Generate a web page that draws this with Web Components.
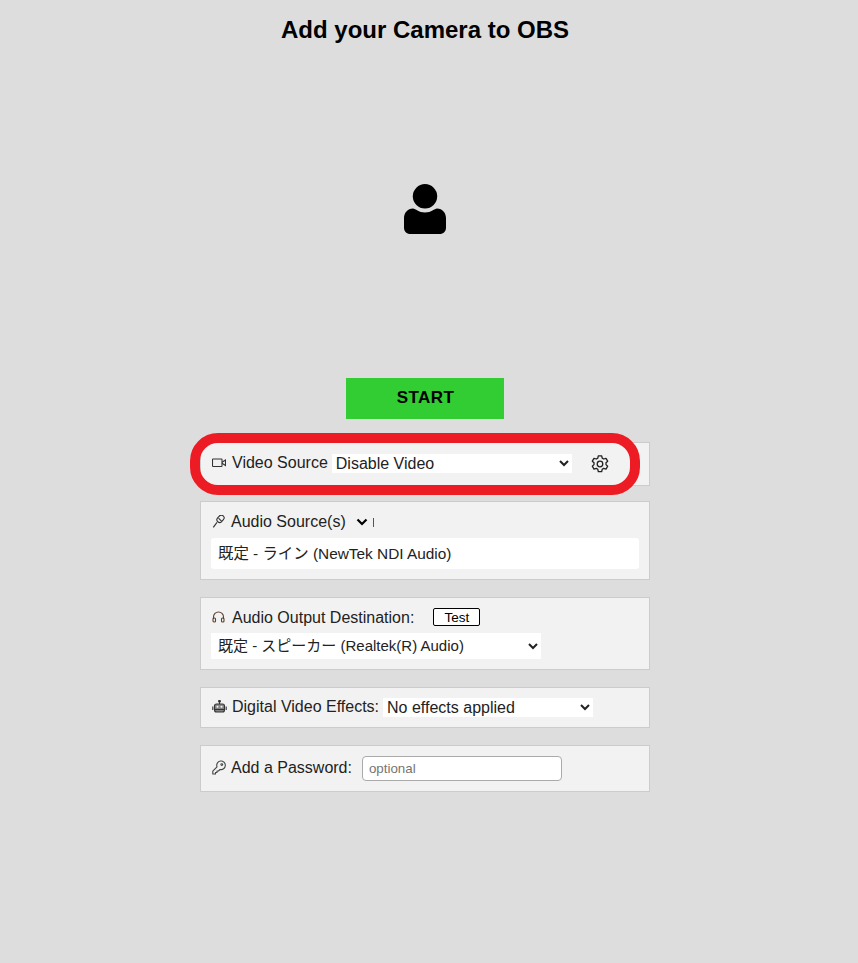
<!DOCTYPE html>
<html lang="en">
<head>
<meta charset="utf-8">
<title>Add your Camera to OBS</title>
<style>
html,body{margin:0;padding:0;background:#ddd;height:100%}
body{font-family:"Liberation Sans",Arial,"Noto Sans CJK JP",sans-serif;color:#000;overflow:hidden}
</style>
</head>
<body>
<setup-page></setup-page>
<template id="tpl-page">
<style>
:host{display:block;width:850px;height:963px;position:relative}
h1{margin:0;padding-top:16px;height:30px;line-height:28px;font-size:24px;font-weight:700;text-align:center}
.preview{display:flex;justify-content:center;height:332px;padding-top:138px;box-sizing:border-box}
.preview svg{display:block;width:42px;height:50px}
.start{display:flex;justify-content:center}
.start button{width:158px;height:41px;border:0;background:#32cd32;color:#000;font:700 17px "Liberation Sans",Arial,sans-serif;letter-spacing:.4px;padding:0 0 1px 1px}
.stack{display:flex;flex-direction:column;align-items:center;margin-top:23px}
.ring{position:absolute;left:190px;top:433px;width:449.500px;height:62px;box-sizing:border-box;border:10px solid #ed1c24;border-radius:28px;pointer-events:none}
select{font:16px "Liberation Sans",Arial,"Noto Sans CJK JP",sans-serif;color:#222;background:#fff;border:0;border-radius:0;outline:0;margin:0;padding:0;height:19px}
.lbl{font-size:16px;line-height:19px;color:#222;white-space:nowrap}
.up{margin-top:-1px;margin-bottom:1px}
.up2{margin-top:-2px;margin-bottom:2px}
.row{display:flex;align-items:center;margin-left:1px}
.ic{display:block;flex:none;fill:none;stroke:#333;stroke-width:1.1}
#video{width:240px;margin-left:4px;margin-bottom:1px}
.gear{margin-left:18.500px;margin-bottom:1px;stroke-width:1.3;stroke:#222}
.chev{display:block;margin-left:10px;fill:none;stroke:#000;stroke-width:2.2}
.meter{width:1px;height:9px;background:#0a8a0a;margin-left:5px;margin-top:1px}
.listing{margin-top:7px;height:31px;line-height:32px;background:#fff;border-radius:3px;padding-left:7px;font-size:15.4px;color:#222;box-sizing:border-box}
.test{margin-left:19px;margin-top:-1px;margin-bottom:1px;width:47px;height:18px;box-sizing:border-box;background:#fff;border:1px solid #000;border-radius:2px;font:13.5px/15px "Liberation Sans",Arial,sans-serif;padding:0;color:#000}
#out{display:block;width:330px;height:26px;margin-top:5px;padding-left:3px;font-size:15px}
#fx{width:210px;margin-left:4px}
input{margin-left:10px;width:200px;height:25px;box-sizing:border-box;border:1px solid #aaa;border-radius:4px;background:#fff;padding:1px 6px;font:13.33px "Liberation Sans",Arial,sans-serif;outline:0}
input::placeholder{color:#757575;opacity:1}
</style>
<h1>Add your Camera to OBS</h1>
<div class="preview">
  <svg viewBox="0 0 42 50"><circle cx="21" cy="12.3" r="12.2" fill="#000"/><path fill="#000" d="M9 24.500C11.500 24.500 14.500 28.500 21 28.500S30.500 24.500 33 24.500C38.500 24.500 42 29 42 34V43.500C42 47.500 39.500 50 35.500 50H6.500C2.500 50 0 47.500 0 43.500V34C0 29 3.500 24.500 9 24.500Z"/></svg>
</div>
<div class="start"><button>START</button></div>
<div class="stack">
  <setup-panel style="height:44px;margin-bottom:15px">
    <div class="row">
      <svg class="ic" style="margin-right:6px;margin-bottom:2px" width="14" height="10" viewBox="0 0 14 10"><rect x=".5" y="1" width="9.500" height="7.500" rx=".6"/><path d="M10 4.200 13.500 2V7.500L10 5.300"/></svg>
      <span class="lbl up2">Video Source</span>
      <select id="video"><option>Disable Video</option></select>
      <svg class="ic gear" width="20" height="20" viewBox="0 0 20 20"><circle cx="10" cy="10" r="2.800"/><path d="M8.300 1.800h3.400l.5 2.300 1.500.9 2.300-.7 1.700 2.900-1.700 1.600v1.800l1.700 1.600-1.700 2.900-2.300-.7-1.500.9-.5 2.300H8.300l-.5-2.300-1.500-.9-2.300.7-1.700-2.900 1.700-1.600V8.800L2.300 7.200 4 4.300l2.300.7 1.500-.9z" stroke-linejoin="round"/></svg>
    </div>
  </setup-panel>
  <setup-panel style="height:79px;margin-bottom:17px">
    <div class="row">
      <svg class="ic" style="margin-right:6px" width="13" height="13" viewBox="0 0 13 13"><rect x="5.800" y="-.2" width="5.400" height="8" rx="2.700" transform="rotate(42 8.500 3.800)"/><path d="M5 7.300 1.300 12.300"/><path d="M6.500 3.200l3.200 3.200"/></svg>
      <span class="lbl">Audio Source(s)</span>
      <svg class="chev" width="12" height="8" viewBox="0 0 12 8"><path d="M1.500 1.500 6 6l4.500-4.500"/></svg>
      <span class="meter"></span>
    </div>
    <div class="listing">既定 - ライン (NewTek NDI Audio)</div>
  </setup-panel>
  <setup-panel style="height:73px;margin-bottom:17px">
    <div class="row">
      <svg class="ic up" style="margin-right:7px;stroke:#5a4030" width="13" height="12" viewBox="0 0 13 12"><path d="M1.500 8V6a5 5 0 0 1 10 0v2"/><rect x="1" y="7" width="2.500" height="4" rx="1"/><rect x="9.500" y="7" width="2.500" height="4" rx="1"/></svg>
      <span class="lbl up">Audio Output Destination:</span>
      <button class="test">Test</button>
    </div>
    <select id="out"><option>既定 - スピーカー (Realtek(R) Audio)</option></select>
  </setup-panel>
  <setup-panel style="height:41px;margin-bottom:17px">
    <div class="row">
      <svg class="ic up" style="margin-right:5px" width="15" height="13" viewBox="0 0 15 13"><circle cx="7.500" cy="1.300" r=".9" fill="#333"/><path d="M7.500 2.200V4"/><rect x="2.500" y="4" width="10" height="8" rx="2" fill="#888"/><path d="M2.500 9.500h10" stroke="#333"/><circle cx="5.500" cy="6.800" r="1" fill="#f2f2f2" stroke="none"/><circle cx="9.500" cy="6.800" r="1" fill="#f2f2f2" stroke="none"/><path d="M.8 6.500v3.500M14.200 6.500v3.500"/></svg>
      <span class="lbl up">Digital Video Effects:</span>
      <select id="fx"><option>No effects applied</option></select>
    </div>
  </setup-panel>
  <setup-panel style="height:47px">
    <div class="row">
      <svg class="ic up" style="margin-right:5px;stroke:#444" width="14" height="15" viewBox="0 0 14 15"><path d="M5 6.800A4.300 4.300 0 1 1 8 9.500L6.500 11H5v1.500H3.500V14H.8v-2.800z" stroke-linejoin="round"/><circle cx="9.800" cy="4.600" r=".9"/></svg>
      <span class="lbl up">Add a Password:</span>
      <input placeholder="optional">
    </div>
  </setup-panel>
</div>
<div class="ring"></div>
</template>
<template id="tpl-panel">
<style>
:host{display:flex;flex-direction:column;justify-content:center;box-sizing:border-box;width:450px;background:#f2f2f2;border:1px solid #ccc;padding:0 10px;color:#222}
</style>
<slot></slot>
</template>
<script>
class SetupPanel extends HTMLElement{
  constructor(){super();this.attachShadow({mode:'open'}).appendChild(document.getElementById('tpl-panel').content.cloneNode(true));}
}
customElements.define('setup-panel',SetupPanel);
class SetupPage extends HTMLElement{
  constructor(){super();this.attachShadow({mode:'open'}).appendChild(document.getElementById('tpl-page').content.cloneNode(true));}
}
customElements.define('setup-page',SetupPage);
</script>
</body>
</html>
